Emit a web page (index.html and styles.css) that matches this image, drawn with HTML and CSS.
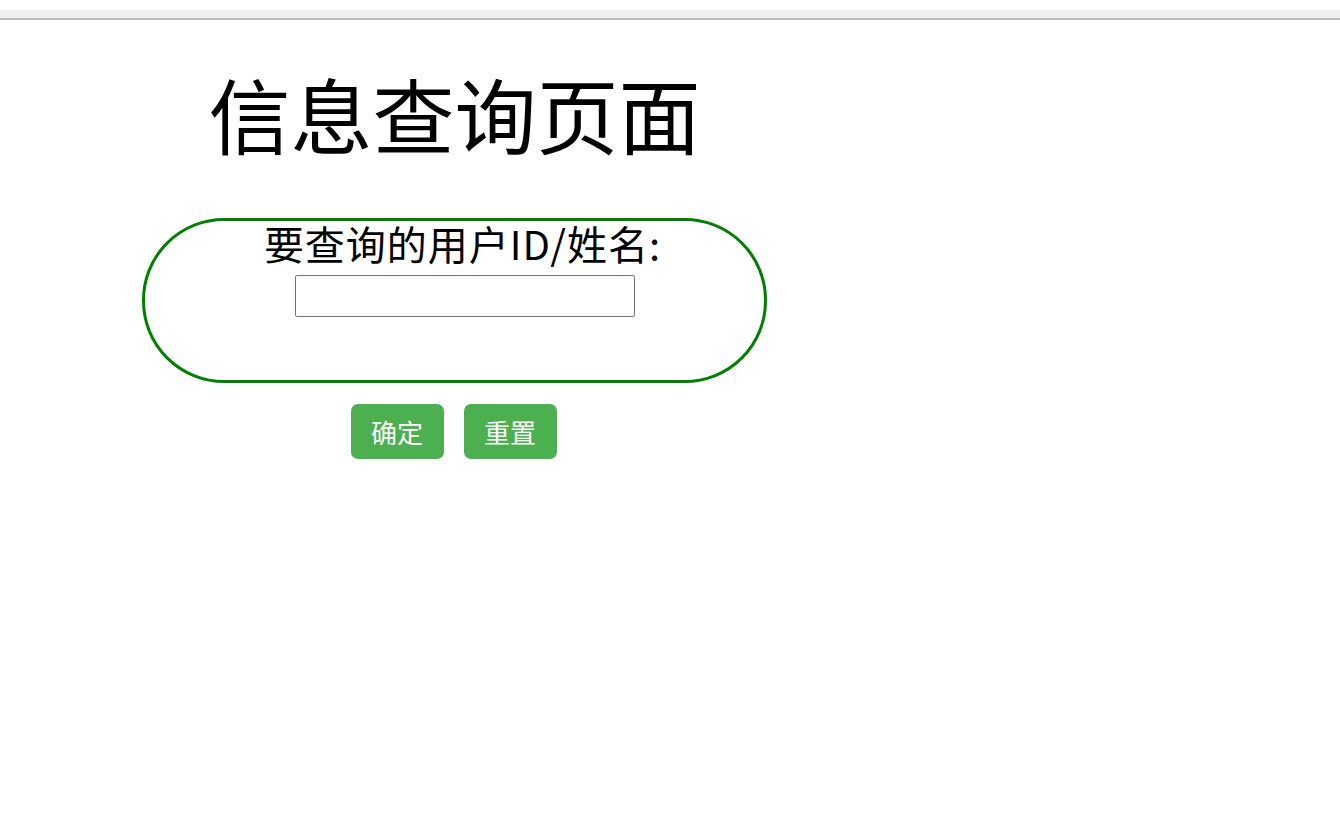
FILE: index.html
```html
<!DOCTYPE html>
<html lang="zh-CN">
<head>
<meta charset="utf-8">
<title>信息查询页面</title>
<link rel="stylesheet" href="styles.css">
</head>
<body>
<div class="topbar"></div>
<div class="wrap">
  <h1 class="title">信息查询页面</h1>
  <form class="query">
    <div class="pill">
      <label class="label" for="q">要查询的用户ID/姓名:</label>
      <input class="field" id="q" type="text">
    </div>
    <div class="actions">
      <button class="btn" type="button">确定</button>
      <button class="btn" type="reset">重置</button>
    </div>
  </form>
</div>
</body>
</html>
```

FILE: styles.css
```css
html, body {
  margin: 0;
  padding: 0;
  background: #ffffff;
}
body {
  font-family: "Noto Sans CJK SC", "Noto Sans", sans-serif;
  color: #000;
}
.topbar {
  margin-top: 10px;
  height: 8px;
  background: #f0f0f0;
  border-bottom: 2px solid #bdbdbd;
}
.wrap {
  width: 625px;
  margin-left: 142px;
  display: flex;
  flex-direction: column;
  align-items: center;
}
.title {
  margin: 52px 0 0 0;
  font-size: 82px;
  line-height: 82px;
  font-weight: 400;
  letter-spacing: 0;
  white-space: nowrap;
}
.query {
  margin-top: 64px;
  width: 100%;
  display: flex;
  flex-direction: column;
  align-items: center;
}
.pill {
  box-sizing: border-box;
  width: 625px;
  height: 165px;
  border: 3px solid #008000;
  border-radius: 82px;
  display: flex;
  flex-direction: column;
  align-items: center;
  padding-top: 2px;
}
.label {
  margin-left: 16px;
  font-size: 40px;
  line-height: 40px;
  letter-spacing: 1px;
  white-space: nowrap;
}
.field {
  box-sizing: border-box;
  margin-top: 12px;
  margin-left: 20px;
  width: 340px;
  height: 42px;
  border: 1px solid #767676;
  border-radius: 2px;
  padding: 0 4px;
  font-size: 20px;
  background: #fff;
}
.actions {
  margin-top: 21px;
  margin-right: 2px;
  display: flex;
  gap: 20px;
}
.btn {
  box-sizing: border-box;
  width: 93px;
  height: 55px;
  border: none;
  border-radius: 7px;
  background: #4caf50;
  color: #fff;
  font-family: "Noto Sans CJK SC", sans-serif;
  font-size: 26px;
  line-height: 1;
  padding: 0;
  cursor: pointer;
}
```
